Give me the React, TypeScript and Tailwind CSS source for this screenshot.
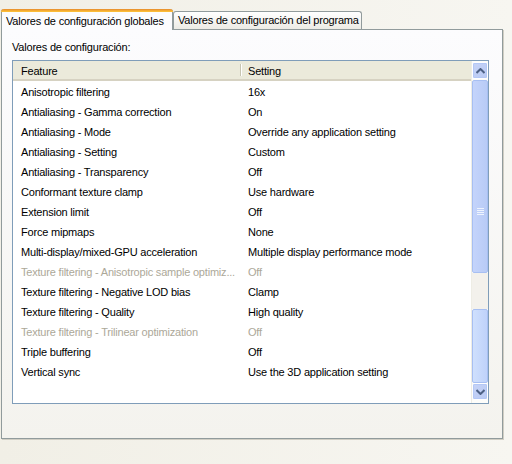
import React from "react";

const rows: [string, string, boolean?][] = [
  ["Anisotropic filtering", "16x"],
  ["Antialiasing - Gamma correction", "On"],
  ["Antialiasing - Mode", "Override any application setting"],
  ["Antialiasing - Setting", "Custom"],
  ["Antialiasing - Transparency", "Off"],
  ["Conformant texture clamp", "Use hardware"],
  ["Extension limit", "Off"],
  ["Force mipmaps", "None"],
  ["Multi-display/mixed-GPU acceleration", "Multiple display performance mode"],
  ["Texture filtering - Anisotropic sample optimiz...", "Off", true],
  ["Texture filtering - Negative LOD bias", "Clamp"],
  ["Texture filtering - Quality", "High quality"],
  ["Texture filtering - Trilinear optimization", "Off", true],
  ["Triple buffering", "Off"],
  ["Vertical sync", "Use the 3D application setting"],
];

function Arrow({ up }: { up?: boolean }) {
  return (
    <svg width="9" height="6" viewBox="0 0 9 6">
      <path
        d={up ? "M0.5 5 L4.5 1 L8.5 5" : "M0.5 1 L4.5 5 L8.5 1"}
        fill="none"
        stroke="#4d6185"
        strokeWidth="2"
      />
    </svg>
  );
}

export default function App() {
  return (
    <div
      className="w-[512px] h-[464px] overflow-hidden bg-gradient-to-r from-[#f1efe6] to-[#f7f6f1] text-[11px] tracking-[-0.2px] text-black whitespace-nowrap"
      style={{ fontFamily: "'Liberation Sans', Arial, sans-serif" }}
    >
      <div className="flex items-end h-[30px] pl-[1px] relative z-10">
        <div className="w-[172px] h-[21px] bg-[#fcfcfe] border-x border-[#919b9c] rounded-t-[3px] flex flex-col">
          <div className="h-[3px] bg-gradient-to-b from-[#e68b2c] to-[#ffc73c] rounded-t-[3px] -mx-[1px]" />
          <div className="pl-[4px] leading-[16px] pt-[1px]">Valores de configuración globales</div>
        </div>
        <div className="w-[189px] h-[18px] mb-[1px] bg-gradient-to-b from-[#ffffff] to-[#ecebe5] border border-b-0 border-[#919b9c] rounded-t-[3px] pl-[4px] leading-[17px]">
          Valores de configuración del programa
        </div>
      </div>
      <div className="ml-[1px] -mt-[1px] w-[502px] h-[410px] border border-[#919b9c] bg-gradient-to-b from-[#fcfcfe] to-[#f4f3ee] shadow-[1px_1px_0_#d0cec4] pl-[10px] pt-[11px]">
        <div className="leading-[13px]">Valores de configuración:</div>
        <div className="mt-[6px] w-[477px] h-[344px] border border-[#7f9db9] bg-white flex">
          <div className="flex-1 flex flex-col">
            <div className="h-[20px] flex bg-[#ebeadb] border-b-2 border-[#d6d2c2] shrink-0">
              <div className="w-[227px] pl-[8px] leading-[20px]">Feature</div>
              <div className="w-[2px] my-[3px] border-l border-[#c7c5b2] border-r border-r-white" />
              <div className="pl-[6px] leading-[20px]">Setting</div>
            </div>
            {rows.map(([f, s, dis]) => (
              <div
                key={f}
                className={`h-[20px] flex leading-[20px] pt-[1px] ${dis ? "text-[#aca899]" : ""}`}
              >
                <div className="w-[235px] pl-[8px] overflow-hidden">{f}</div>
                <div>{s}</div>
              </div>
            ))}
          </div>
          <div className="w-[17px] flex flex-col bg-[#fdfdfa] border-l border-[#eeede5]">
            <div className="h-[17px] mt-[1px] rounded-[2px] border border-white bg-gradient-to-br from-[#c6d3f7] to-[#b9caf3] flex items-center justify-center shadow-[inset_0_0_0_1px_#b4c8f6]">
              <Arrow up />
            </div>
            <div className="h-[193px] mt-[1px] rounded-[2px] border border-[#a7bff2] bg-gradient-to-r from-[#c4d4fb] to-[#b8cbf6] flex items-center justify-center pt-[70px]">
              <div className="flex flex-col gap-[1px]">
                <div className="w-[7px] h-[1px] bg-[#eef4fe]" />
                <div className="w-[7px] h-[1px] bg-[#eef4fe]" />
                <div className="w-[7px] h-[1px] bg-[#eef4fe]" />
                <div className="w-[7px] h-[1px] bg-[#eef4fe]" />
              </div>
            </div>
            <div className="h-[36px] bg-[#f3f1ec]" />
            <div className="h-[74px] rounded-[2px] border border-[#a7bff2] bg-gradient-to-r from-[#cfe0fd] to-[#bfd2fa]" />
            <div className="h-[17px] rounded-[2px] border border-white bg-gradient-to-br from-[#c6d3f7] to-[#b9caf3] flex items-center justify-center shadow-[inset_0_0_0_1px_#b4c8f6]">
              <Arrow />
            </div>
          </div>
        </div>
      </div>
    </div>
  );
}
